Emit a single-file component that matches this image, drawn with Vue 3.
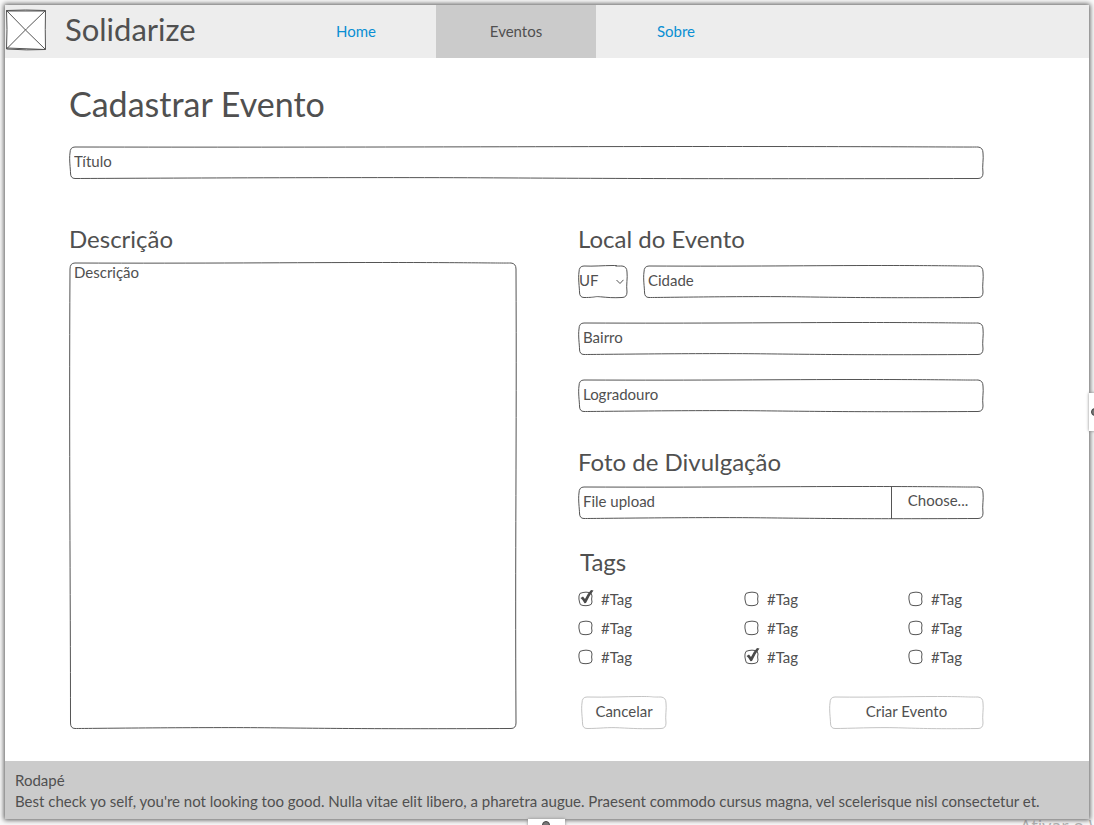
<script setup>
import { h, ref } from 'vue'

const tags = ref([
  { id: 1, on: true }, { id: 2, on: false }, { id: 3, on: false },
  { id: 4, on: false }, { id: 5, on: false }, { id: 6, on: false },
  { id: 7, on: false }, { id: 8, on: true }, { id: 9, on: false },
])

// Hand-drawn outline that stretches with the control it surrounds.
const SketchFrame = (props) => {
  const w = props.w
  const t = props.h
  const d = `M6 1 C${w * 0.3} 1.5 ${w * 0.5} .5 ${w * 0.7} .5 S${w - 20} 1.2 ${w - 6} 1 Q${w - 1} 1.500 ${w - 1} 7 `
    + `C${w - 0.2} ${t * 0.4} ${w - 2} ${t * 0.6} ${w - 1} ${t - 6} Q${w - 1} ${t - 0.5} ${w - 6} ${t - 0.5} `
    + `C${w * 0.7} ${t} ${w * 0.6} ${t - 0.5} ${w * 0.45} ${t - 1.2} S20 ${t - 0.5} 6 ${t - 0.5} Q1.5 ${t - 0.5} 1.5 ${t - 6} `
    + `C1.5 ${t * 0.7} 0 ${t * 0.4} 1 7 Q1 1 6 1Z`
  return h('svg', { viewBox: `0 0 ${w} ${t}`, preserveAspectRatio: 'none', 'aria-hidden': 'true' }, [
    h('path', { d, fill: '#fff', stroke: props.color || '#555', 'stroke-width': 1, 'vector-effect': 'non-scaling-stroke' }),
  ])
}
SketchFrame.props = ['w', 'h', 'color']
</script>

<template>
  <div class="desk">
    <span class="notice">Ativar o Windows</span>
    <div class="page">
      <header class="topbar">
        <svg class="logo" viewBox="0 0 42 42" aria-hidden="true">
          <path d="M1.5 1.5 Q20 .5 40.5 1.5 Q40 20 40.5 40.5 Q22 41.5 1.5 40 Q2.5 20 1.5 1.5Z" fill="#fff" stroke="#555" />
          <path d="M1.5 1.5 Q20 21 40.5 40.5 M40.5 1.5 Q22 19 1.5 40 M1 2 L40 2 M2 39 L40 40.500" fill="none" stroke="#555" />
        </svg>
        <span class="brand">Solidarize</span>
        <nav class="nav">
          <a href="#home">Home</a>
          <a href="#eventos" class="active" aria-current="page">Eventos</a>
          <a href="#sobre">Sobre</a>
        </nav>
      </header>

      <main class="content">
        <h1>Cadastrar Evento</h1>
        <div class="field">
          <SketchFrame class="frame" :w="915" :h="33" />
          <input type="text" placeholder="Título" aria-label="Título">
        </div>

        <form class="columns" @submit.prevent>
          <section class="left">
            <h2><label for="descricao">Descrição</label></h2>
            <div class="field area">
              <SketchFrame class="frame" :w="448" :h="466" />
              <textarea id="descricao" placeholder="Descrição"></textarea>
            </div>
          </section>

          <section class="right">
            <h2>Local do Evento</h2>
            <div class="city-row">
              <div class="field uf">
                <SketchFrame class="frame" :w="50" :h="33" />
                <select aria-label="UF"><option>UF</option></select>
                <svg class="chevron" viewBox="0 0 8 6" aria-hidden="true"><path d="M.5 1 L4 4.500 L7.500 .8" fill="none" stroke="#555" /></svg>
              </div>
              <div class="field">
                <SketchFrame class="frame" :w="341" :h="33" />
                <input type="text" placeholder="Cidade" aria-label="Cidade">
              </div>
            </div>
            <div class="field spaced">
              <SketchFrame class="frame" :w="406" :h="33" />
              <input type="text" placeholder="Bairro" aria-label="Bairro">
            </div>
            <div class="field spaced">
              <SketchFrame class="frame" :w="406" :h="33" />
              <input type="text" placeholder="Logradouro" aria-label="Logradouro">
            </div>

            <h2 class="photo-title">Foto de Divulgação</h2>
            <div class="field upload">
              <SketchFrame class="frame" :w="406" :h="33" />
              <input type="text" placeholder="File upload" aria-label="File upload" readonly>
              <button type="button" class="choose">Choose...</button>
            </div>

            <h2 class="tags-title">Tags</h2>
            <div class="tags">
              <label v-for="tag in tags" :key="tag.id" class="tag">
                <span class="tick">
                  <input v-model="tag.on" type="checkbox">
                  <svg viewBox="0 0 16 18" aria-hidden="true">
                    <path d="M5 3.500 Q8 2.800 11 3.500 Q14 3.500 14 7 Q13.200 10 14 13 Q14 16 11 16.300 Q8 17 5 16.500 Q1.500 16.500 1.500 13 Q.6 10 1 7 Q1 3.500 5 3.500Z" fill="none" stroke="#555" />
                    <path v-if="tag.on" d="M2.500 9 L5 7.500 L7 10 Q9.500 4.500 13 1 L15.500 1.500 Q11 7 8 14 L6.500 14.300 Q5 11 2.500 9Z" fill="#4a4a4a" />
                  </svg>
                </span>
                #Tag
              </label>
            </div>

            <div class="actions">
              <button type="button" class="cancel"><SketchFrame class="frame" :w="86" :h="33" color="#c4c4c4" /><span>Cancelar</span></button>
              <button type="submit" class="create"><SketchFrame class="frame" :w="155" :h="33" color="#c4c4c4" /><span>Criar Evento</span></button>
            </div>
          </section>
        </form>
      </main>

      <footer class="footer">
        <p>Rodapé</p>
        <p>Best check yo self, you're not looking too good. Nulla vitae elit libero, a pharetra augue. Praesent commodo cursus magna, vel scelerisque nisl consectetur et.</p>
      </footer>
    </div>
    <span class="handle side"></span>
    <span class="handle bottom"></span>
  </div>
</template>

<style>
html, body { margin: 0; background: #fff; }
</style>

<style scoped>
.desk {
  position: relative;
  box-sizing: border-box;
  min-height: 100vh;
  padding: 5px 5px 6px;
  overflow: hidden;
  display: flex;
  flex-direction: column;
  background: #fafafa;
  color: #505050;
  font-family: Lato, "Open Sans", sans-serif;
  font-size: 15px;
  line-height: 21px;
}
.page {
  position: relative;
  flex: 1;
  display: flex;
  flex-direction: column;
  background: #fff;
  box-shadow: 0 0 5px 1px #555;
}
.topbar { display: flex; height: 53px; background: #ededed; }
.logo { width: 42px; height: 42px; margin-top: 4px; flex: none; }
.brand { width: 211px; margin-left: 18px; font-size: 31px; line-height: 48px; }
.nav { display: flex; flex: 1; }
.nav a {
  width: 160px;
  line-height: 52px;
  text-align: center;
  text-decoration: none;
  color: #0a8fd3;
}
.nav a.active { background: #cbcbcb; color: #505050; }
.content { flex: 1; padding: 23px 105px 32px 64px; }
h1, h2, p { margin: 0; font-weight: 400; }
h1 { font-size: 34px; line-height: 46px; margin-bottom: 19px; }
h2 { font-size: 24px; line-height: 32px; }
.field { position: relative; display: flex; height: 33px; flex: 1; }
.frame { position: absolute; inset: 0; width: 100%; height: 100%; overflow: visible; }
input[type="text"], textarea, select, button {
  position: relative;
  box-sizing: border-box;
  margin: 0;
  border: 0;
  background: none;
  color: #505050;
  font: inherit;
  outline-offset: 2px;
}
input[type="text"] { flex: 1; min-width: 0; padding: 0 5px 3px; }
::placeholder { color: #505050; opacity: 1; }
.columns { display: grid; grid-template-columns: 448fr 406fr; gap: 61px; margin-top: 44px; }
.left, .right { display: flex; flex-direction: column; }
.left .field { margin-top: 7px; }
textarea { width: 100%; padding: 0 5px; resize: none; }
.city-row { display: flex; gap: 15px; margin-top: 10px; }
.uf { flex: 0 0 50px; }
select { width: 100%; padding: 0 0 3px 1px; appearance: none; }
.chevron { position: absolute; right: 4px; top: 14px; width: 8px; height: 6px; pointer-events: none; }
.spaced, .upload { flex: none; }
.spaced { margin-top: 24px; }
.photo-title { margin-top: 34px; }
.upload { margin-top: 8px; }
.choose { width: 93px; padding: 0 0 4px; border-left: 1px solid #555; }
.tags-title { margin-top: 27px; padding-left: 2px; }
.tags { display: grid; grid-template-columns: 166fr 164fr 76fr; row-gap: 8px; margin-top: 11px; }
.tag { display: flex; gap: 7px; }
.tick { position: relative; width: 16px; height: 18px; }
.tick input { position: absolute; inset: 0; width: 100%; height: 100%; margin: 0; opacity: 0; }
.tick svg { display: block; width: 16px; height: 18px; pointer-events: none; }
.actions { display: flex; justify-content: space-between; margin-top: 28px; padding-left: 3px; }
.actions button { height: 33px; padding: 0 0 3px; }
.actions span { position: relative; }
.cancel { width: 86px; }
.create { width: 155px; }
.footer { padding: 9px 10px 7px; background: #cbcbcb; }
.handle { position: absolute; background: #fff; box-shadow: 0 0 3px #888; }
.handle::after { content: ""; position: absolute; width: 6px; height: 6px; border: 1px solid #444; border-radius: 50%; background: #777; }
.side { top: 393px; right: -32px; width: 37px; height: 38px; }
.side::after { left: 2px; top: 15px; }
.bottom { left: 528px; bottom: -31px; width: 37px; height: 37px; }
.bottom::after { left: 14px; top: 2px; }
.notice { position: absolute; left: 1020px; bottom: -12px; white-space: nowrap; font: 18px/21px "Open Sans", sans-serif; color: #b4b4b4; }
</style>
